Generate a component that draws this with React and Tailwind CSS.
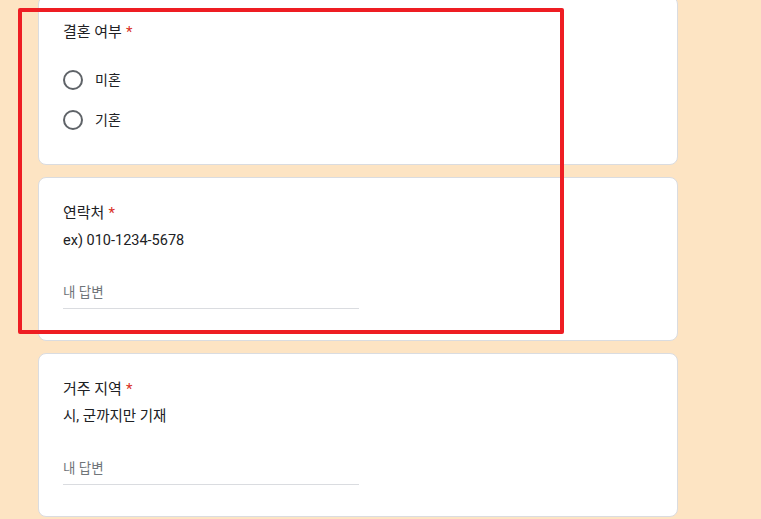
const FONT = { fontFamily: '"Roboto", "Noto Sans CJK KR", sans-serif' };

function Title({ children }) {
  return (
    <div className="text-[15px] leading-6 text-[#202124]">
      {children}
      <span className="ml-1 text-[#d93025]">*</span>
    </div>
  );
}

function Radio({ label }) {
  return (
    <label className="flex h-10 items-center gap-3 cursor-pointer">
      <span className="h-5 w-5 rounded-full border-2 border-[#5f6368]" />
      <span className="text-[14px] text-[#202124]">{label}</span>
    </label>
  );
}

function ShortAnswer({ title, hint }) {
  return (
    <div className="rounded-lg border border-[#dadce0] bg-white px-6 pt-[23px] pb-[31px]">
      <Title>{title}</Title>
      <p className="mt-[6px] text-[14.5px] leading-5 text-[#202124]">{hint}</p>
      <div className="mt-[31px] w-[296px] border-b border-[#dadce0] pb-[6px]">
        <input
          placeholder="내 답변"
          className="block w-full bg-transparent text-[13.5px] leading-5 text-[#202124] outline-none placeholder:text-[#70757a]"
        />
      </div>
    </div>
  );
}

export default function App() {
  return (
    <main className="relative h-[519px] overflow-hidden bg-[#fde4c3]" style={FONT}>
      <div className="ml-[38px] mt-[-4px] flex w-[640px] flex-col gap-3">
        <div className="rounded-lg border border-[#dadce0] bg-white px-6 pt-[23px] pb-6">
          <Title>결혼 여부</Title>
          <div className="mt-4 flex flex-col">
            <Radio label="미혼" />
            <Radio label="기혼" />
          </div>
        </div>

        <ShortAnswer title="연락처" hint="ex) 010-1234-5678" />
        <ShortAnswer title="거주 지역" hint="시, 군까지만 기재" />
      </div>

      {/* annotation box drawn over the form */}
      <div className="pointer-events-none absolute left-[18px] top-[8px] h-[326px] w-[546px] rounded-[2px] border-4 border-[#ee1d23]" />
    </main>
  );
}
